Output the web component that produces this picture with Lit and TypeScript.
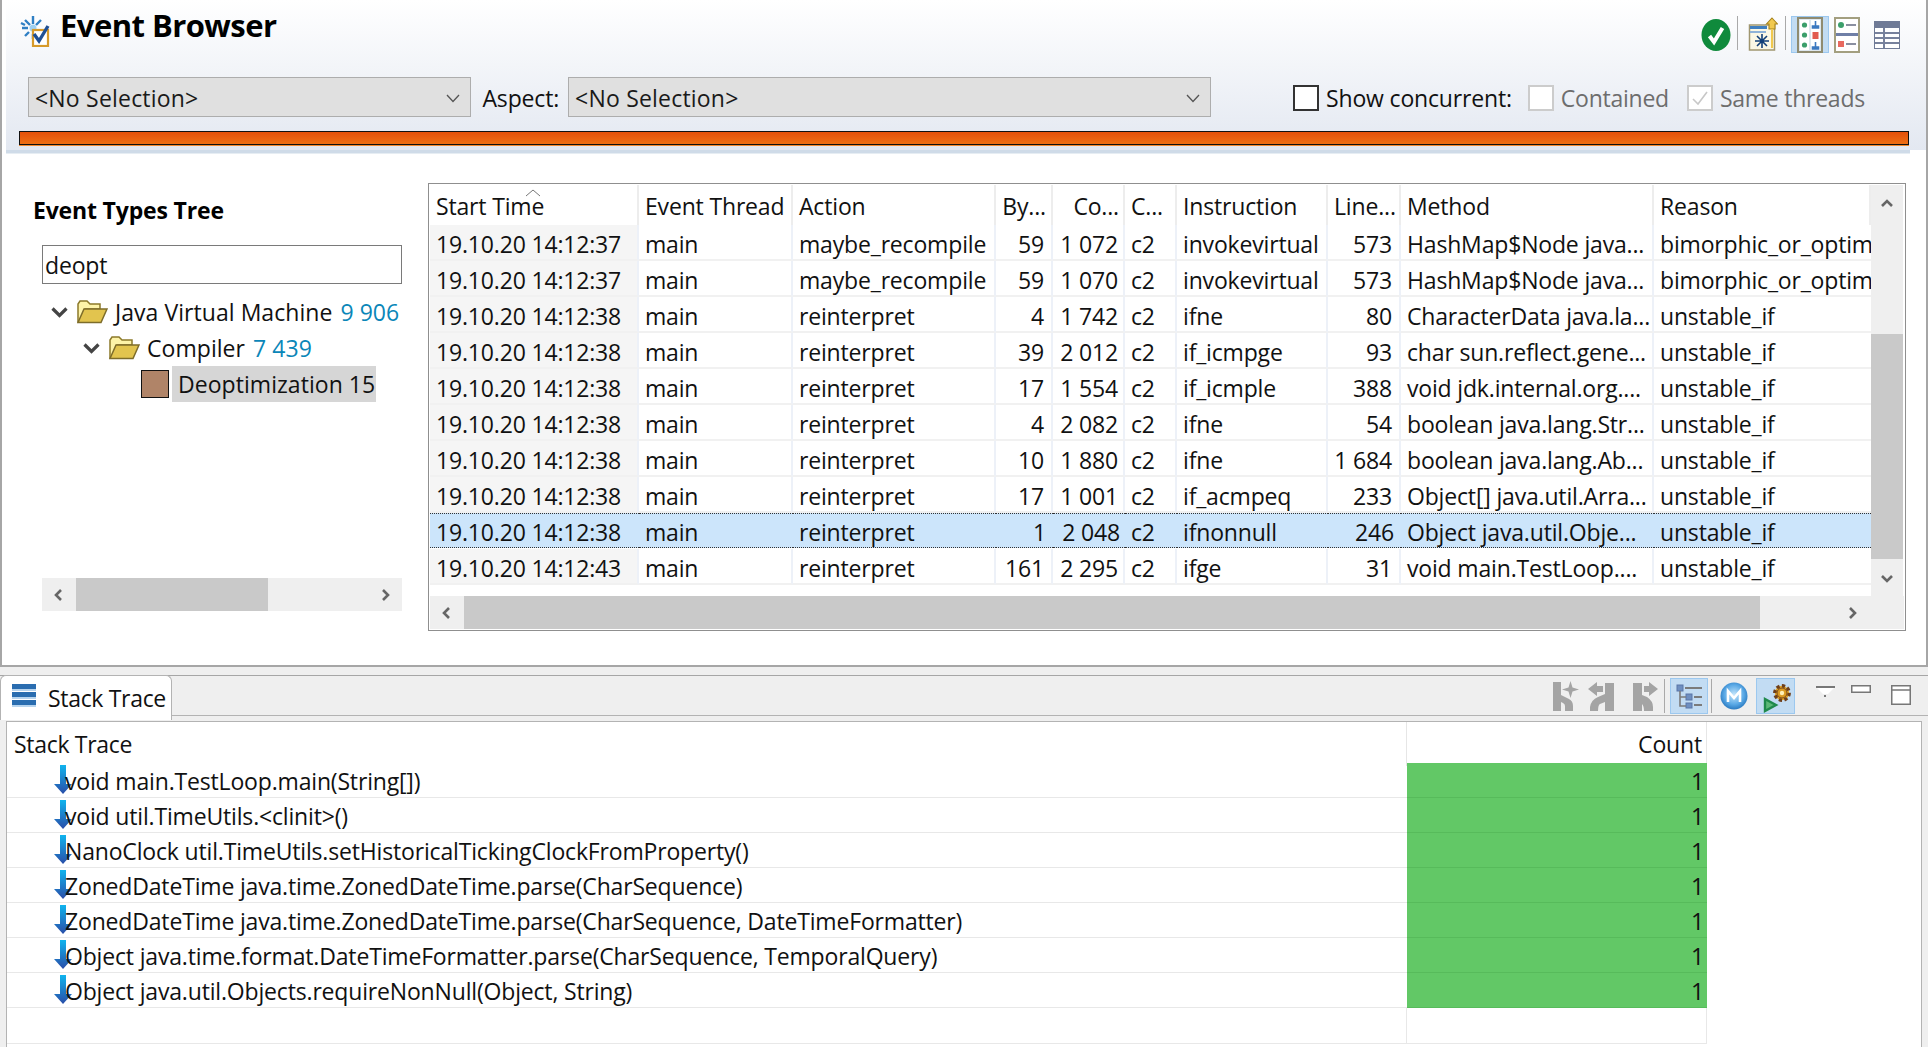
import { LitElement, html, css } from "lit";
import { customElement } from "lit/decorators.js";

const rows = [
  ["19.10.20 14:12:37","main","maybe_recompile","59","1 072","c2","invokevirtual","573","HashMap$Node java...","bimorphic_or_optimized_type_check"],
  ["19.10.20 14:12:37","main","maybe_recompile","59","1 070","c2","invokevirtual","573","HashMap$Node java...","bimorphic_or_optimized_type_check"],
  ["19.10.20 14:12:38","main","reinterpret","4","1 742","c2","ifne","80","CharacterData java.la...","unstable_if"],
  ["19.10.20 14:12:38","main","reinterpret","39","2 012","c2","if_icmpge","93","char sun.reflect.gene...","unstable_if"],
  ["19.10.20 14:12:38","main","reinterpret","17","1 554","c2","if_icmple","388","void jdk.internal.org....","unstable_if"],
  ["19.10.20 14:12:38","main","reinterpret","4","2 082","c2","ifne","54","boolean java.lang.Str...","unstable_if"],
  ["19.10.20 14:12:38","main","reinterpret","10","1 880","c2","ifne","1 684","boolean java.lang.Ab...","unstable_if"],
  ["19.10.20 14:12:38","main","reinterpret","17","1 001","c2","if_acmpeq","233","Object[] java.util.Arra...","unstable_if"],
  ["19.10.20 14:12:38","main","reinterpret","1","2 048","c2","ifnonnull","246","Object java.util.Obje...","unstable_if"],
  ["19.10.20 14:12:43","main","reinterpret","161","2 295","c2","ifge","31","void main.TestLoop....","unstable_if"],
];
const heads = ["Start Time","Event Thread","Action","By...","Co...","C...","Instruction","Line...","Method","Reason"];
const rightCols = new Set([3,4,7]);
const frames = [
  "void main.TestLoop.main(String[])",
  "void util.TimeUtils.<clinit>()",
  "NanoClock util.TimeUtils.setHistoricalTickingClockFromProperty()",
  "ZonedDateTime java.time.ZonedDateTime.parse(CharSequence)",
  "ZonedDateTime java.time.ZonedDateTime.parse(CharSequence, DateTimeFormatter)",
  "Object java.time.format.DateTimeFormatter.parse(CharSequence, TemporalQuery)",
  "Object java.util.Objects.requireNonNull(Object, String)",
];

const chev = (d: string, size = 16) => {
  const p: Record<string,string> = {
    l: "M10 3 L5 8 L10 13", r: "M6 3 L11 8 L6 13", u: "M3 10 L8 5 L13 10", d: "M3 6 L8 11 L13 6",
  };
  return html`<svg width=${size} height=${size} viewBox="0 0 16 16"><path d=${p[d]} fill="none" stroke="#666" stroke-width="2.6"/></svg>`;
};
const treeChev = html`<svg width="17" height="12" viewBox="0 0 17 12"><path d="M1.5 2.5 L8.5 9.5 L15.5 2.5" fill="none" stroke="#444" stroke-width="3.2"/></svg>`;
const folder = html`<svg width="32" height="24" viewBox="0 0 32 24">
  <path d="M2 22 V4 L4 1 H11 L14 4 H24 V9 H9 L3 22Z" fill="#fdf3a8" stroke="#8c7a2a" stroke-width="1.5"/>
  <path d="M2 22.5 L8 9 H31 L25 22.5Z" fill="#e2c44e" stroke="#7d6c2a" stroke-width="1.5"/>
</svg>`;
const downArrow = html`<svg class="arrow" width="18" height="29" viewBox="0 0 18 29">
  <defs><linearGradient id="ar" x1="0" y1="0" x2="0" y2="1"><stop offset="0" stop-color="#0fb4ee"/><stop offset="1" stop-color="#2a4da8"/></linearGradient></defs>
  <path d="M6 0 H12 V19 H18 L9 29 L0 19 H6Z" fill="url(#ar)"/>
</svg>`;
const eventIcon = html`<svg width="30" height="32" viewBox="0 0 30 32">
  <g stroke="#2f7fc4" stroke-width="2.4" fill="none">
    <path d="M13 1 V9 M13 19 V24 M2 13 H8 M5 5 L10 10 M21 5 L16 10 M5 21 L9 17 M1 8 L5 10"/>
  </g>
  <circle cx="13" cy="13" r="3.5" fill="#9fd0f2"/>
  <rect x="13" y="15" width="15" height="16" fill="#fff" stroke="#d79a2a" stroke-width="2.2"/>
  <path d="M14 19 L19 26 L28 11" fill="none" stroke="#1f4f94" stroke-width="3.4"/>
</svg>`;
const okIcon = html`<svg width="30" height="32" viewBox="0 0 30 32">
  <ellipse cx="15" cy="16" rx="14.5" ry="16" fill="#0f8a3c"/>
  <path d="M8.5 17 L13 23 L21.5 9" fill="none" stroke="#fff" stroke-width="4"/>
</svg>`;
const newIcon = html`<svg width="30" height="36" viewBox="0 0 30 36">
  <rect x="1.5" y="8" width="25" height="25" fill="#fbf8e6" stroke="#a09670" stroke-width="1.5"/>
  <rect x="2" y="9" width="17" height="3" fill="#3f7fc0"/><rect x="2" y="14" width="16" height="2" fill="#8fb3d8"/>
  <g stroke="#123f78" stroke-width="1.6"><path d="M14 17 V31 M7 24 H21 M9 19 L19 29 M19 19 L9 29"/></g>
  <path d="M24 1 L29.5 7 H27 V12 H21 V7 H18.5Z" fill="#f1c94f" stroke="#a7831d" stroke-width="1.1"/>
  <path d="M24 12 V31" stroke="#f1c94f" stroke-width="2"/>
</svg>`;
const splitIcon = html`<svg width="26" height="36" viewBox="0 0 26 36">
  <rect x="1" y="1" width="24" height="34" fill="#dfe8ef" stroke="#8f8b70" stroke-width="2"/>
  <rect x="3" y="3" width="9" height="30" fill="#fff"/><rect x="14" y="3" width="9" height="30" fill="#fff"/>
  <circle cx="7.5" cy="8" r="2.6" fill="#3c9f6b"/><circle cx="7.5" cy="18" r="2.6" fill="#3c9f6b"/><circle cx="7.5" cy="28" r="2.6" fill="#3c9f6b"/>
  <path d="M18.5 4 V9 M15.5 11 H21.5 V9 H15.5Z" fill="#3a78c0" stroke="#3a78c0" stroke-width="1.6"/>
  <rect x="15.5" y="15" width="6" height="7" fill="#e25c50"/>
  <path d="M18.5 25 V30 M15.5 32 H21.5 V30 H15.5Z" fill="#3a78c0" stroke="#3a78c0" stroke-width="1.6"/>
</svg>`;
const formIcon = html`<svg width="26" height="36" viewBox="0 0 26 36">
  <rect x="1" y="1" width="24" height="34" fill="#fff" stroke="#a39f80" stroke-width="2"/>
  <rect x="2" y="16" width="22" height="3" fill="#6f7fa6"/>
  <circle cx="7" cy="8" r="3" fill="#3c9f6b"/><path d="M12 8 H22" stroke="#8a8fa0" stroke-width="2"/>
  <rect x="4" y="24" width="6" height="6" fill="#e86a60"/><path d="M12 27 H22" stroke="#8a8fa0" stroke-width="2"/>
</svg>`;
const tableIcon = html`<svg width="26" height="28" viewBox="0 0 26 28">
  <rect x="0.5" y="0.5" width="25" height="27" fill="#fff" stroke="#6f7a96"/>
  <rect x="1" y="1" width="24" height="6" fill="#6f7a96"/>
  <path d="M1 12 H25 M1 17 H25 M1 22 H25 M10 7 V27" stroke="#77819c" stroke-width="2" fill="none"/>
</svg>`;
const kStar = html`<svg width="26" height="30" viewBox="0 0 26 30">
  <path d="M0 1 H8 V14 L16 18 Q20 20 20 25 V30 H12 V25 Q12 23 10 22 L8 21 V30 H0Z" fill="#a4a4a4"/>
  <path d="M17.5 0 L19.5 6.5 L26 8.5 L19.5 10.5 L17.5 17 L15.5 10.5 L9 8.5 L15.5 6.5Z" fill="#a4a4a4"/>
</svg>`;
const kBack = html`<svg width="26" height="30" viewBox="0 0 26 30">
  <path d="M17 2 H26 V30 H17 V21 L12 23 Q10 24 10 30 H2 V26 Q3 19 10 16 L17 13Z" fill="#a4a4a4"/>
  <path d="M0 8 L9 1 V5 H15 V11 H9 V15Z" fill="#a4a4a4"/>
</svg>`;
const kFwd = html`<svg width="25" height="30" viewBox="0 0 25 30">
  <path d="M0 2 H9 V14 L14 16 Q20 20 20 26 V30 H11 Q11 25 9 23 V30 H0Z" fill="#a4a4a4"/>
  <path d="M25 8 L16 1 V5 H11 V11 H16 V15Z" fill="#a4a4a4"/>
</svg>`;
const treeTgl = html`<svg width="26" height="26" viewBox="0 0 26 26">
  <rect x="1" y="2" width="6" height="6" fill="#6f8fc0" stroke="#5a76a8"/>
  <rect x="10" y="11" width="6" height="6" fill="#6f8fc0" stroke="#5a76a8"/>
  <rect x="10" y="20" width="6" height="5" fill="#6f8fc0" stroke="#5a76a8"/>
  <path d="M4 8 V23 H10 M4 14 H10" fill="none" stroke="#7b7b7b" stroke-width="1.6"/>
  <path d="M9 5 H26 M18 14 H26 M18 22 H26" stroke="#7b7b7b" stroke-width="2"/>
</svg>`;
const mIcon = html`<svg width="28" height="28" viewBox="0 0 28 28">
  <defs><radialGradient id="mg" cx="0.5" cy="0.45" r="0.6"><stop offset="0" stop-color="#c6e6fb"/><stop offset="0.6" stop-color="#5aa9e6"/><stop offset="1" stop-color="#1f6fb8"/></radialGradient></defs>
  <circle cx="14" cy="14" r="13.5" fill="url(#mg)"/>
  <path d="M8 20 V9 L14 16 L20 9 V20" fill="none" stroke="#fff" stroke-width="2.6"/>
</svg>`;
const gearIcon = html`<svg width="36" height="34" viewBox="0 0 36 34">
  <circle cx="24" cy="14" r="7.2" fill="#e0a326" stroke="#6e3f1a" stroke-width="3.4" stroke-dasharray="3.2 2.4"/>
  <circle cx="24" cy="14" r="5" fill="#d99a22" stroke="#7a4a1a" stroke-width="1"/>
  <circle cx="24" cy="14" r="2.2" fill="#fff0b8"/>
  <path d="M7 20 L18 26 L7 32Z" fill="#5cb878" stroke="#1f8a4c" stroke-width="2.4"/>
</svg>`;
const listIcon = html`<svg width="24" height="23" viewBox="0 0 24 23">
  <rect y="0" width="24" height="5" fill="#2a6db0"/><rect y="5" width="24" height="2" fill="#b7d4ee"/>
  <rect y="8" width="24" height="5" fill="#2a6db0"/><rect y="13" width="24" height="2" fill="#b7d4ee"/>
  <rect y="16" width="24" height="5" fill="#2a6db0"/><rect y="21" width="24" height="2" fill="#b7d4ee"/>
</svg>`;

@customElement("app-root")
export class AppRoot extends LitElement {
  static styles = css`
    :host { display: block; width: 1928px; height: 1047px; overflow: hidden; background: #efefef;
      font-family: "Open Sans", "Noto Sans", sans-serif; font-size: 23px; letter-spacing: -0.17px; color: #111; }
    * { box-sizing: border-box; }
    svg { display: block; flex: none; }

    .top { height: 667px; background: #fff; border: solid #a6a6a6; border-width: 0 2px 2px 2px; display: flex; flex-direction: column; }
    .header { margin: 0 0 0 4px; height: 150px; background: linear-gradient(#fff, #e3e8f1); display: flex; flex-direction: column; }
    .rule { margin-left: 4px; height: 4px; background: #cfdbe8; border-bottom: 1px solid #e6edf3; margin-right: 16px; }
    .titlebar { height: 77px; display: flex; justify-content: space-between; padding: 10px 26px 0 14px; }
    .title { display: flex; align-items: flex-start; gap: 10px; font-size: 31px; font-weight: 700; line-height: 30px; color: #000; letter-spacing: -0.55px; }
    .title svg { margin-top: 5px; }
    .tools { display: flex; align-items: flex-start; padding-top: 6px; }
    .tool { height: 37px; display: flex; align-items: center; justify-content: center; }
    .tgl { background: #c2dcf3; border: 1px solid #9cc8ef; }
    .sep { width: 1px; background: #a9a9a9; height: 34px; }

    .controls { height: 40px; display: flex; align-items: center; padding-left: 22px; white-space: nowrap; }
    .combo { height: 40px; flex: none; background: #e0e0e0; border: 1px solid #adadad; display: flex; align-items: center; justify-content: space-between; padding: 2px 10px 0 6px; color: #1a1a1a; letter-spacing: 0.2px; }
    .combo.a { width: 443px; }
    .combo.b { width: 643px; margin-left: 9px; }
    .lbl { margin-left: 11.5px; position: relative; top: 1px; }
    .cb { width: 26px; height: 26px; border: 2px solid #333; background: #fff; margin-right: 7px; flex: none; }
    .cb.off { border-color: #ccc; }
    .dim { color: #6d6d6d; letter-spacing: -0.25px; }
    .checks { margin-left: 82px; display: flex; align-items: center; padding-top: 1px; }
    .bar { margin: 14px 17px 0 13px; height: 14px; background: linear-gradient(#e4500a, #ee6f14); border: 1.5px solid #111; box-shadow: 0 1px 0 #f08a30; }

    .body { flex: 1; display: flex; min-height: 0; position: relative; }
    .left { width: 426px; padding: 40.5px 0 0 31px; display: flex; flex-direction: column; flex: none; }
    .tt { font-weight: 700; font-size: 23px; line-height: 30px; color: #000; }
    .filter { margin: 20.5px 0 0 9px; width: 360px; height: 39px; border: 1px solid #7a7a7a; padding: 0 2px; line-height: 38px; }
    .tree { margin: 10px 0 0 7px; height: 284px; width: 362px; letter-spacing: 0.05px; }
    .node { height: 36px; display: flex; align-items: center; white-space: nowrap; }
    .node .tc { margin-right: 8px; }
    .node svg + span { margin-left: 7px; }
    .n1 { padding-left: 11px; } .n2 { padding-left: 43px; }
    .num { color: #0a86b8; margin-left: 8px; }
    .sel { margin-left: 97px; width: 239px; background: #d6d6d6; }
    .swatch { width: 35px; height: 36px; background: #fff; padding: 4px 3.5px; margin-right: 6px; flex: none; }
    .swatch i { display: block; height: 28px; background: #b08468; border: 1.5px solid #111; }
    .sb { background: #efefef; display: flex; align-items: center; }
    .hsb { height: 33px; width: 360px; margin-left: 9px; }
    .thumb { background: #c9c9c9; align-self: stretch; }
    .ar { display: flex; align-items: center; justify-content: center; width: 34px; flex: none; }
    .grow { flex: 1; }

    .table { position: absolute; left: 426px; top: 29px; width: 1478px; height: 448px; border: 1.5px solid #8f8f8f; padding: 1px; display: flex; flex-direction: column; background: #fff; }
    .main { flex: 1; display: flex; min-height: 0; }
    .cols { width: 1441px; flex: none; overflow: hidden; }
    .row { display: grid; grid-template-columns: 209px 154px 203px 57px 72px 52px 151px 73px 253px 217px; height: 36px; }
    .row > div { overflow: hidden; white-space: nowrap; padding: 2px 6px 0; line-height: 35px; border-right: 2px solid #edf1f8; border-bottom: 2px solid #f1f1f1; }
    .row > div:first-child { background: #f5f5f5; }
    .row > div.r { text-align: right; padding-right: 7px; }
    .row > div.r:nth-child(5) { padding-right: 5px; }
    .row > div:last-child { border-right: 0; }
    .hd { height: 40px; position: relative; }
    .hd > div, .hd > div:first-child { background: #fff; border-bottom: 0; border-right: 2px solid #ededed; line-height: 42px; padding-top: 0; }
    .hd > div.r { padding-right: 5px; }
    .hd > div.r:nth-child(5) { padding-right: 4px; }
    .row.s { height: 35px; margin-bottom: 1px; }
    .row.s > div, .row.s > div:first-child { background: #cce5fb; border: 0; border-top: 1px dotted #333; border-bottom: 1px dotted #333; line-height: 36px; height: 35px; padding-top: 0; }
    .sort { position: absolute; left: 94px; top: 3px; }
    .vsb { width: 32px; flex-direction: column; align-items: stretch; }
    .vsb .ar { width: 32px; height: 37px; }
    .hbar { height: 33px; }
    .hbar .ar { height: 33px; }

    .tabs { margin-top: 8px; height: 46px; display: flex; border-top: 1.5px solid #a6a6a6; }
    .tab { width: 172px; height: 45px; margin-top: -1px; background: #fff; border: 1.5px solid #b3b3b3; border-bottom: 0; border-radius: 6px 6px 0 0; display: flex; align-items: center; padding-left: 11px; gap: 12px; letter-spacing: -0.32px; }
    .tab svg { position: relative; top: -3px; }
    .tabline { flex: 1; border-bottom: 1.5px solid #b3b3b3; display: flex; justify-content: flex-end; align-items: center; padding-right: 17px; height: 40px; }
    .tabline .tool { height: 36px; }
    .wctl { display: flex; align-items: flex-start; }
    .panel { margin: 0 6px; background: #fff; border: 1.5px solid #b3b3b3; height: 340px; border-bottom: 0; }
    .srow { display: grid; grid-template-columns: 1400px 300px 1fr; height: 35px; }
    .srow > div { border-bottom: 1.5px solid #e8e8e8; overflow: hidden; white-space: nowrap; }
    .srow .nm { display: flex; align-items: center; padding-left: 47px; }
    .srow .nm span { position: relative; top: 1px; }
    .arrow { margin-right: -7px; position: relative; top: -1px; }
    .srow .ct { background: #62c866; text-align: right; padding-right: 3px; line-height: 36px; border-bottom: 1.5px solid #57bb5b; }
    .srow > div:last-child { border-bottom: 0; }
    .shd { height: 41px; display: grid; grid-template-columns: 1400px 300px 1fr; line-height: 44px; }
    .shd .h1 { padding-left: 7px; border-right: 1.5px solid #e6e6e6; letter-spacing: -0.3px; }
    .shd .h2 { text-align: right; padding-right: 4px; border-right: 1.5px solid #e6e6e6; }
    .blank { height: 36px; display: grid; grid-template-columns: 1400px 300px; border-bottom: 1.5px solid #e8e8e8; width: 1700px; }
    .blank div { border-right: 1.5px solid #e8e8e8; }
  `;

  render() {
    return html`
      <div class="top">
        <div class="header">
          <div class="titlebar">
            <div class="title">${eventIcon}<span>Event Browser</span></div>
            <div class="tools">
              <div class="tool" style="margin-right:6px">${okIcon}</div>
              <div class="sep"></div>
              <div class="tool" style="margin:0 7px 0 10px">${newIcon}</div>
              <div class="sep"></div>
              <div class="tool tgl" style="width:38px;margin:0 5px">${splitIcon}</div>
              <div class="tool" style="margin-right:14px">${formIcon}</div>
              <div class="tool">${tableIcon}</div>
            </div>
          </div>
          <div class="controls">
            <div class="combo a"><span>&lt;No Selection&gt;</span>${this.comboChev()}</div>
            <span class="lbl">Aspect:</span>
            <div class="combo b"><span>&lt;No Selection&gt;</span>${this.comboChev()}</div>
            <div class="checks">
              <div class="cb"></div><span>Show concurrent:</span>
              <div class="cb off" style="margin-left:16px"></div><span class="dim">Contained</span>
              <div class="cb off" style="margin-left:18px;display:flex;align-items:center;justify-content:center"><svg width="18" height="16" viewBox="0 0 18 16"><path d="M2 9 L7 14 L16 2" fill="none" stroke="#c8c8c8" stroke-width="1.6"/></svg></div><span class="dim">Same threads</span>
            </div>
          </div>
          <div class="bar"></div>
        </div>
        <div class="rule"></div>
        <div class="body">
          <div class="left">
            <div class="tt">Event Types Tree</div>
            <div class="filter">deopt</div>
            <div class="tree">
              <div class="node n1"><span class="tc">${treeChev}</span>${folder}<span>Java Virtual Machine</span><span class="num">9 906</span></div>
              <div class="node n2"><span class="tc">${treeChev}</span>${folder}<span>Compiler</span><span class="num">7 439</span></div>
              <div class="node sel"><div class="swatch"><i></i></div><span>Deoptimization 15</span></div>
            </div>
            <div class="sb hsb"><div class="ar">${chev("l")}</div><div class="thumb" style="width:192px"></div><div class="grow"></div><div class="ar">${chev("r")}</div></div>
          </div>
          <div class="table">
            <div class="main">
              <div class="cols">
                <div class="row hd">
                  ${heads.map((h, j) => html`<div class=${rightCols.has(j) ? "r" : ""}>${h}</div>`)}
                  <svg class="sort" width="18" height="9" viewBox="0 0 18 9" style="position:absolute"><path d="M2 8 L9 2 L16 8" fill="none" stroke="#777" stroke-width="1"/></svg>
                </div>
                ${rows.map((r, i) => html`<div class="row ${i === 8 ? "s" : ""}">
                  ${r.map((c, j) => html`<div class=${rightCols.has(j) ? "r" : ""}>${c}</div>`)}
                </div>`)}
              </div>
              <div class="sb vsb">
                <div class="ar">${chev("u")}</div>
                <div style="height:113px"></div>
                <div class="thumb" style="height:228px"></div>
                <div class="grow"></div>
                <div class="ar">${chev("d")}</div>
              </div>
            </div>
            <div class="sb hbar">
              <div class="ar">${chev("l")}</div>
              <div class="thumb" style="width:1296px"></div>
              <div class="grow"></div>
              <div class="ar" style="margin-right:35px">${chev("r")}</div>
            </div>
          </div>
        </div>
      </div>
      <div class="tabs">
        <div class="tab">${listIcon}<span>Stack Trace</span></div>
        <div class="tabline">
          <div class="tool" style="margin-right:9px">${kStar}</div>
          <div class="tool" style="margin-right:19px">${kBack}</div>
          <div class="tool" style="margin-right:6px">${kFwd}</div>
          <div class="sep"></div>
          <div class="tool tgl" style="width:38px;margin:0 3px 0 5px">${treeTgl}</div>
          <div class="sep"></div>
          <div class="tool" style="margin:0 8px">${mIcon}</div>
          <div class="tool tgl" style="width:39px">${gearIcon}</div>
          <div class="wctl">
            <svg style="margin:0 0 0 21px" width="19" height="12" viewBox="0 0 19 12"><path d="M0 1 H19 L12 8 H7Z" fill="#fff"/><path d="M0 1 H19" stroke="#777" stroke-width="2"/><rect x="8" y="9" width="2" height="2" fill="#777"/></svg>
            <svg style="margin:-1px 0 0 16px" width="20" height="8" viewBox="0 0 20 8"><rect x="0.75" y="0.75" width="18.5" height="6.5" fill="#fff" stroke="#777" stroke-width="1.5"/></svg>
            <svg style="margin:-1px 0 0 20px" width="20" height="20" viewBox="0 0 20 20"><rect x="0.75" y="0.75" width="18.5" height="18.5" fill="#fff" stroke="#777" stroke-width="1.5"/><path d="M0 5 H20" stroke="#777" stroke-width="1.5"/></svg>
          </div>
        </div>
      </div>
      <div class="panel">
        <div class="shd"><div class="h1">Stack Trace</div><div class="h2">Count</div></div>
        ${frames.map((f) => html`<div class="srow"><div class="nm">${downArrow}<span>${f}</span></div><div class="ct">1</div><div></div></div>`)}
        <div class="blank"><div></div><div></div></div>
      </div>
    `;
  }

  comboChev() {
    return html`<svg width="14" height="9" viewBox="0 0 14 9"><path d="M1 1 L7 7.5 L13 1" fill="none" stroke="#555" stroke-width="1.3"/></svg>`;
  }
}
